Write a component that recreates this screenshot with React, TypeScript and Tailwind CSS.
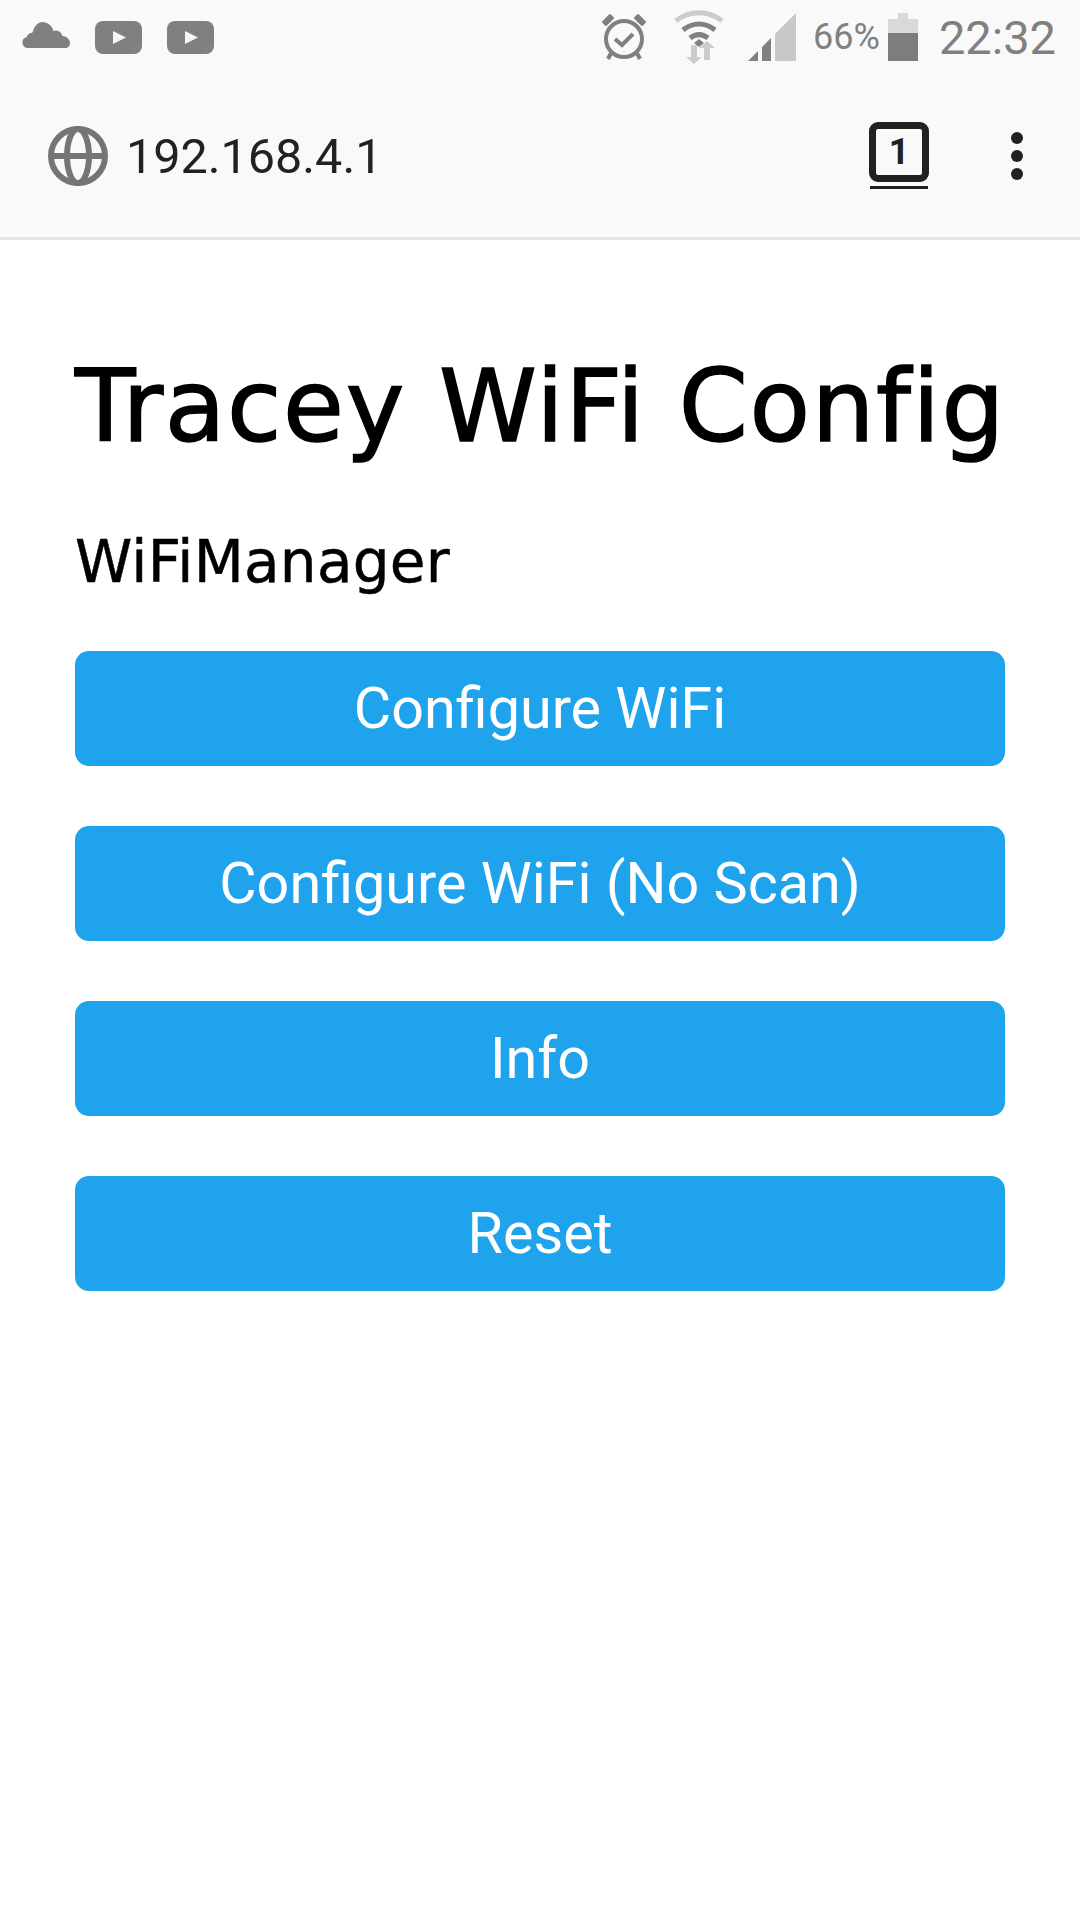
const roboto = { fontFamily: 'Roboto, sans-serif' };

function Cloud() {
  return (
    <svg width="48" height="26" viewBox="0 0 48 26" className="-mt-[4px] block">
      <path d="M6 26a5.500 5.500 0 0 1-1.500-10.800C6 12 8 11 10.500 10.600C12 4 16.500 0 20.500 0c5 0 9.500 3.500 11 9 3-1.500 7.500 0 9 5 4.500.5 7.500 3.500 7.500 7 0 3-2 5-5 5z" fill="#808080" />
    </svg>
  );
}

function Youtube() {
  return (
    <svg width="47" height="33" viewBox="0 0 47 33" className="block">
      <rect width="47" height="33" rx="8" fill="#808080" />
      <path d="M18 10 31 16.500 18 23z" fill="#f5f5f5" />
    </svg>
  );
}

function Globe() {
  return (
    <svg width="60" height="60" viewBox="0 0 60 60" className="block" fill="none" stroke="#757575" strokeWidth="6">
      <circle cx="30" cy="30" r="27" />
      <ellipse cx="30" cy="30" rx="11" ry="27" />
      <path d="M3 30h54" />
    </svg>
  );
}

function Alarm() {
  return (
    <svg width="46" height="48" viewBox="0 0 46 48" className="block" fill="none" stroke="#808080">
      <circle cx="23" cy="26" r="18" strokeWidth="4" />
      <path d="M14 26l7 6 11-11" strokeWidth="4" />
      <path d="M2 9 9 2l3 3-7 7zM44 9l-7-7-3 3 7 7z" fill="#808080" strokeWidth="2" strokeLinejoin="round" />
      <path d="M10 40l-3 6M36 40l3 6" strokeWidth="4" />
    </svg>
  );
}

function Wifi() {
  return (
    <svg width="50" height="54" viewBox="0 0 50 54" className="block" fill="none">
      <path d="M2 11C15 0 35 0 48 11" stroke="#cccccc" strokeWidth="5" />
      <path d="M9 20c10-8 22-8 32 0" stroke="#808080" strokeWidth="5" />
      <path d="M16 28c6-4.500 12-4.500 18 0" stroke="#808080" strokeWidth="5" />
      <path d="M20 33l5-4 5 4-5 4z" fill="#808080" />
      <path d="M17 35h6v12h5l-8 7-8-7h5z" fill="#cccccc" />
      <path d="M30 50V38h-5l8-7 8 7h-5v12z" fill="#cccccc" />
    </svg>
  );
}

function Signal() {
  return (
    <svg width="48" height="48" viewBox="0 0 48 48" className="block">
      <path d="M0 48 10 38v10z" fill="#808080" />
      <path d="M14 34l9-9v23h-9z" fill="#808080" />
      <path d="M27 21 48 0v48H27z" fill="#c8c8c8" />
    </svg>
  );
}

function Battery() {
  return (
    <svg width="30" height="48" viewBox="0 0 30 48" className="block">
      <path d="M0 6h10V0h10v6h10v14H0z" fill="#d9d9d9" />
      <rect y="20" width="30" height="28" fill="#7d7d7d" />
    </svg>
  );
}

function StatusBar() {
  return (
    <div className="flex h-[74px] items-center justify-between pl-[22px] pr-[24px]">
      <div className="flex items-center">
        <Cloud />
        <div className="ml-[25px]"><Youtube /></div>
        <div className="ml-[25px]"><Youtube /></div>
      </div>
      <div className="flex items-center text-[#808080]" style={roboto}>
        <Alarm />
        <div className="ml-[27px]"><Wifi /></div>
        <div className="ml-[24px]"><Signal /></div>
        <span className="ml-[17px] text-[36px] leading-none">66%</span>
        <div className="ml-[8px]"><Battery /></div>
        <span className="ml-[21px] text-[47px] leading-none">22:32</span>
      </div>
    </div>
  );
}

function Toolbar() {
  return (
    <div className="flex h-[166px] items-center border-b-[3px] border-[#e6e6e6] pl-[48px] pr-[57px]">
      <Globe />
      <span className="ml-[18px] pt-[4px] text-[48.500px] leading-none text-[#212121]" style={roboto}>192.168.4.1</span>
      <div className="ml-auto flex flex-col items-center">
        <div className="flex h-[60px] w-[60px] items-center justify-center rounded-[9px] border-[7px] border-[#212121] text-[36px] font-bold text-[#212121]" style={roboto}>1</div>
        <div className="mt-[4px] h-[3px] w-[58px] bg-[#212121]" />
      </div>
      <div className="ml-[82px] flex flex-col gap-[6px]">
        <div className="h-[12px] w-[12px] rounded-full bg-[#212121]" />
        <div className="h-[12px] w-[12px] rounded-full bg-[#212121]" />
        <div className="h-[12px] w-[12px] rounded-full bg-[#212121]" />
      </div>
    </div>
  );
}

const buttons = ['Configure WiFi', 'Configure WiFi (No Scan)', 'Info', 'Reset'];

export default function App() {
  return (
    <div className="min-h-[1920px] bg-white">
      <div className="bg-[#f9f9f9]">
        <StatusBar />
        <Toolbar />
      </div>
      <div className="px-[75px] pt-[111px]" style={{ fontFamily: '"DejaVu Sans", sans-serif' }}>
        <h1 className="whitespace-nowrap text-[99px] leading-[112px] tracking-[1.600px] text-black [-webkit-text-stroke:1.500px_black]">Tracey WiFi Config</h1>
        <h3 className="mt-[67px] text-[58px] leading-[65px] tracking-[0.300px] text-black [-webkit-text-stroke:0.5px_black]">WiFiManager</h3>
        <div className="mt-[56px] flex flex-col gap-[60px]">
          {buttons.map(label => (
            <button
              key={label}
              className="h-[115px] w-[930px] rounded-[14px] bg-[#1fa3ec] pt-[2px] text-[57.500px] text-white"
              style={roboto}
            >
              {label}
            </button>
          ))}
        </div>
      </div>
    </div>
  );
}
